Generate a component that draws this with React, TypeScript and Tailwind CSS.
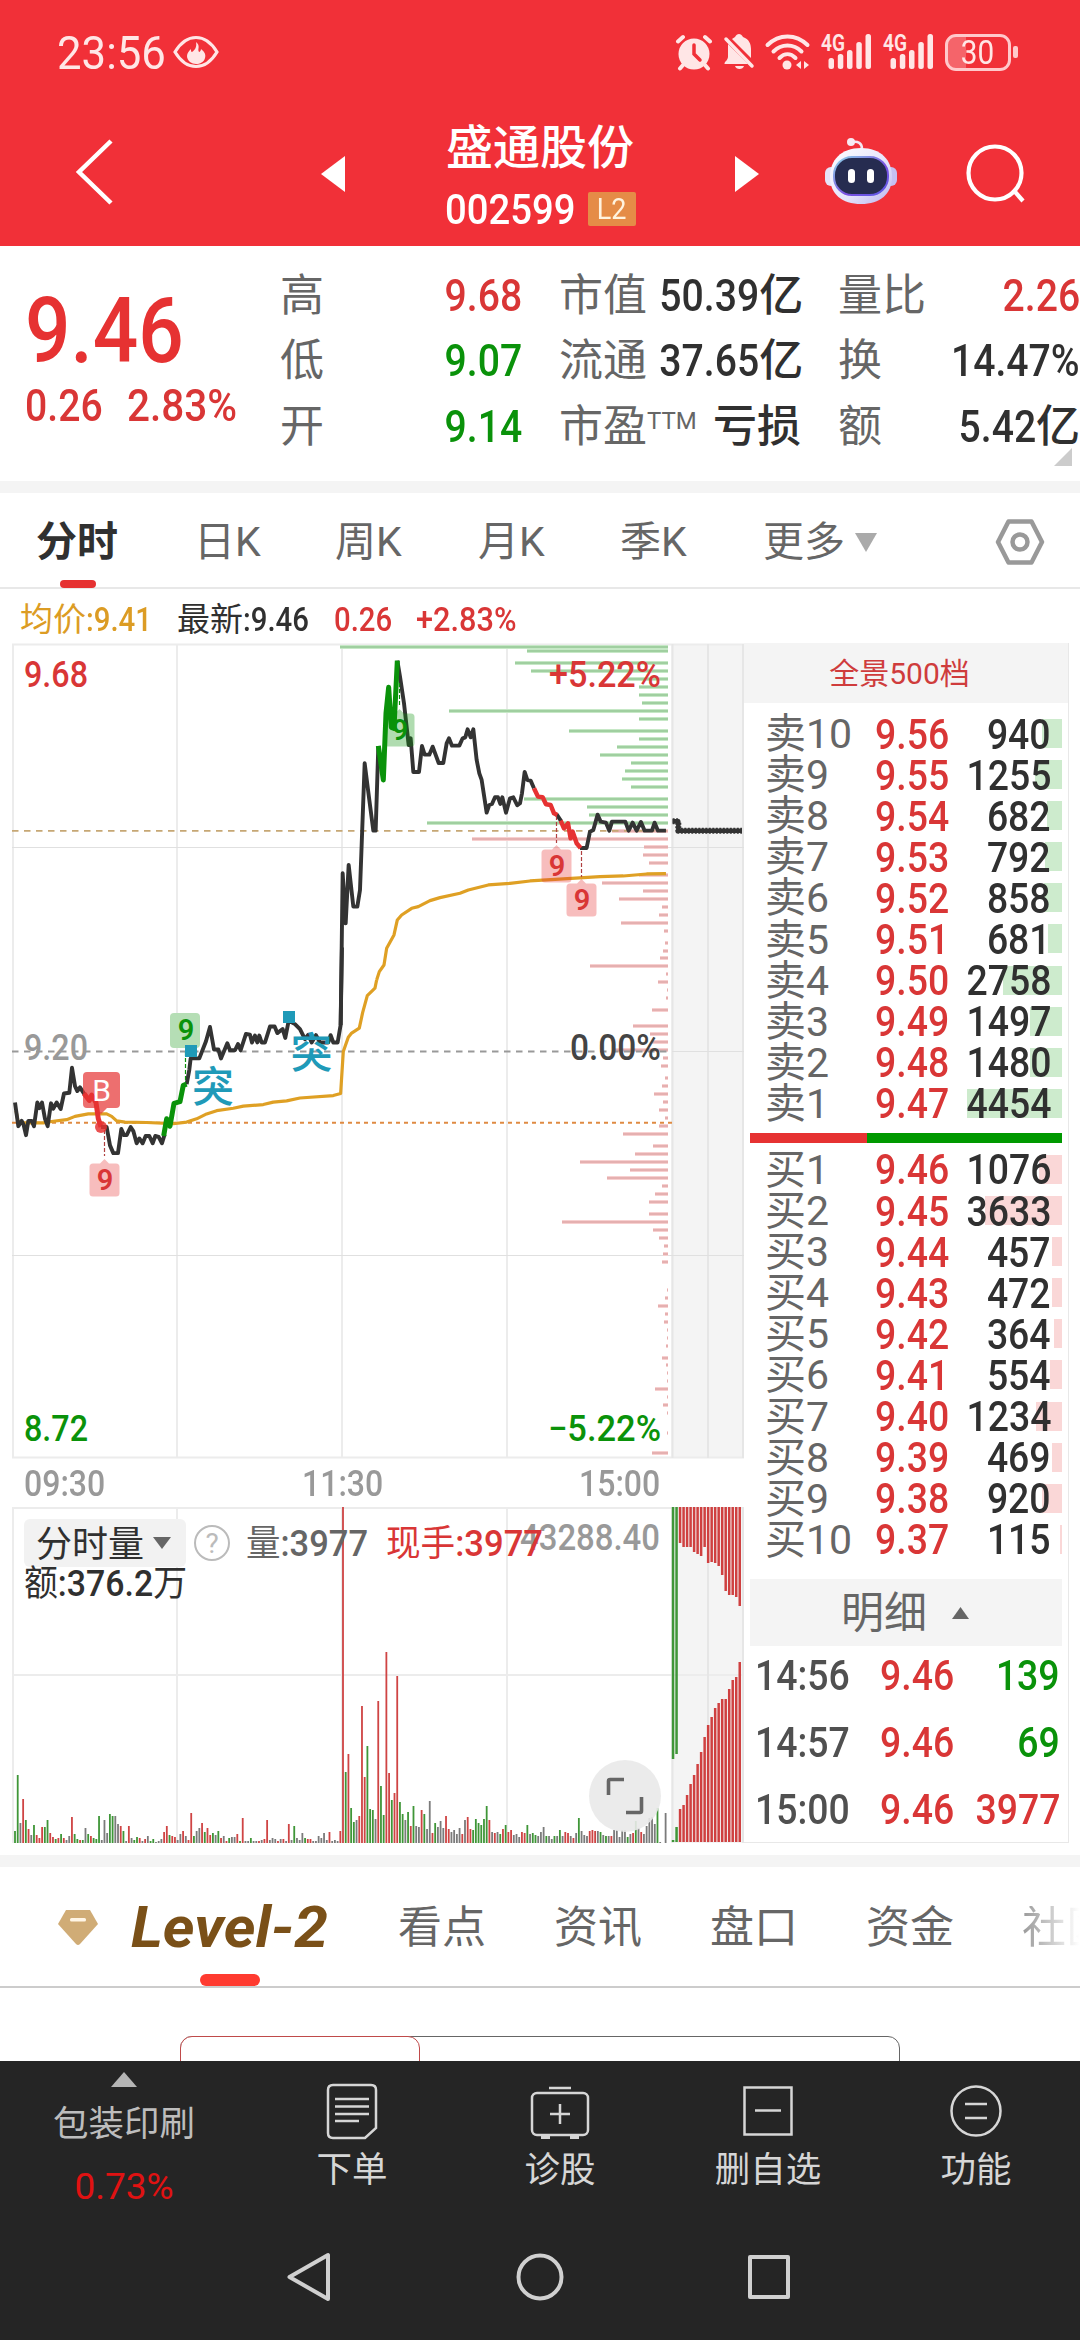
import React from 'react';

type Tone = 'r' | 'g' | 'k';

const TONE_FILL: Record<Tone, string> = {
    r: '#cf4444',
    g: '#3f9638',
    k: '#7b7b7b',
};

// --- Depth-of-book data ---
const SELLS: [string, string, number][] = [
    ['卖10', '9.56', 940],
    ['卖9', '9.55', 1255],
    ['卖8', '9.54', 682],
    ['卖7', '9.53', 792],
    ['卖6', '9.52', 858],
    ['卖5', '9.51', 681],
    ['卖4', '9.50', 2758],
    ['卖3', '9.49', 1497],
    ['卖2', '9.48', 1480],
    ['卖1', '9.47', 4454],
];

const BUYS: [string, string, number][] = [
    ['买1', '9.46', 1076],
    ['买2', '9.45', 3633],
    ['买3', '9.44', 457],
    ['买4', '9.43', 472],
    ['买5', '9.42', 364],
    ['买6', '9.41', 554],
    ['买7', '9.40', 1234],
    ['买8', '9.39', 469],
    ['买9', '9.38', 920],
    ['买10', '9.37', 115],
];

const TRADES = [
    { time: '14:56', price: '9.46', volume: '139', color: 'text-[#0a920a]' },
    { time: '14:57', price: '9.46', volume: '69', color: 'text-[#0a920a]' },
    { time: '15:00', price: '9.46', volume: '3977', color: 'text-[#d93636]' },
];

// Chips by price level: [y, length], drawn leftwards from the right edge of the chart
const CHIPS_ABOVE = [
    [647, 328], [651, 141], [663, 153], [671, 137], [679, 41], [687, 29], [695, 29], [703, 26], [711, 219], [719, 29],
    [731, 99], [739, 29], [747, 51], [755, 68], [763, 37], [771, 43], [779, 46], [787, 37], [799, 144], [807, 81],
    [815, 79], [823, 241],
];

const CHIPS_BELOW = [
    [831, 56], [839, 196], [847, 24], [855, 25], [863, 19], [875, 29], [883, 66], [891, 25], [899, 49], [907, 6],
    [915, 9], [923, 47], [931, 4], [943, 3], [951, 5], [958, 8], [966, 78], [974, 2], [982, 10], [990, 1],
    [998, 2], [1010, 16], [1026, 35], [1034, 18], [1042, 16], [1050, 55], [1058, 5], [1066, 7], [1078, 3], [1086, 6],
    [1094, 14], [1102, 5], [1110, 9], [1118, 3], [1126, 9], [1134, 45], [1146, 15], [1154, 33], [1162, 88], [1170, 38],
    [1178, 61], [1186, 6], [1194, 13], [1202, 19], [1214, 19], [1222, 106], [1230, 15], [1238, 9], [1246, 4], [1254, 5],
    [1262, 6], [1290, 1], [1298, 3], [1306, 10], [1314, 3], [1322, 4], [1330, 1], [1338, 1], [1346, 2], [1358, 6],
    [1365, 2], [1373, 1], [1381, 1], [1389, 13], [1397, 1], [1405, 5], [1413, 1], [1433, 1], [1453, 16],
];

// Minute volumes, one token per minute: tone + bar height
const MORNING =
    'g12 g68 k20 r44 g23 r14 k8 g18 r8 r5 r16 g16 g23 r10 r6 g4 r5 g9 r5 k3 k7 r26 g9 g4 r3 g3 k15 g9 r7 g5 g4 g27 k3 k23 k10 g29 g27 k27 k19 r17 g12 k2 r17 k5 g3 g6 r5 k2 r4 k7 g2 g4 k1 k2 k4 r11 r17 g8 r7 r6 k3 k9 r12 k7 r3 r30 g7 k12 k15 r20 g11 r15 r8 g10 k8 g12 r5 k7 r2 g5 k6 k6 r9 g2 r25 k2 k2 g5 k2 k2 r2 k3 r4 r23 k3 k5 k4 r2 k4 r4 k2 r19 k3 g17 k5 k3 k10 g5 r4 r4 k2 k2 k7 k5 k10 k3 r11 k2 k3 k2 r12';
const AFTERNOON =
    'r336 g71 r89 g35 g21 k23 r27 r137 r66 g97 g34 g33 k24 r142 g57 g28 r191 r70 g43 r50 r167 g41 g29 k23 g31 r17 g37 k17 k16 r33 g29 k14 k42 r10 g20 k16 k22 k15 r27 r14 k11 k13 k9 k15 r9 k23 r26 r14 g13 g24 g20 g18 g24 g37 r23 k11 r10 k11 g9 r14 g18 r11 r13 k8 k9 k6 r11 r10 g18 k9 g10 g8 k7 k11 k16 g7 k7 k4 g7 k7 g13 k7 r11 r10 k7 r5 k10 g25 k12 k8 k7 r12 r13 r12 k12 g11 k8 g7 k7 r7 k13 k13 k6 k13 k13 g6 k9 r10 g22 k15 r11 k9 k17 k25 k26 k19 g35 k1 k0 k30';

const AUCTION_TOP = [252, 247, 36, 40, 40, 40, 45, 47, 49, 40, 56, 55, 56, 59, 68, 84, 88, 88, 90, 99];
const AUCTION_BOTTOM = [2, 15, 33, 37, 47, 58, 67, 78, 90, 105, 117, 125, 134, 139, 143, 143, 153, 162, 165, 180];

const parseBars = (source: string) =>
    source.split(' ').map(token => ({ tone: token[0] as Tone, height: Number(token.slice(1)) }));

// Figures are set condensed; `right` keeps the right edge in place instead of the left one
const Num: React.FC<{ children: React.ReactNode; right?: boolean }> = ({ children, right }) => (
    <span className={`inline-block scale-x-[0.89] ${right ? 'origin-right' : 'origin-left'}`}>{children}</span>
);

/* ------------------------------ status bar ------------------------------ */

const Signal: React.FC = () => (
    <svg className="overflow-visible" width="52" height="38" viewBox="0 0 52 38" fill="#ffe6e6">
        <text x="0" y="18" fontSize="23" fontWeight="600" textLength="24" lengthAdjust="spacingAndGlyphs">4G</text>
        <rect x="7.5" y="25" width="5.5" height="11" rx="2.5" />
        <rect x="16.8" y="21" width="5.5" height="15" rx="2.5" />
        <rect x="26" y="17" width="5.5" height="19" rx="2.5" />
        <rect x="35.3" y="9" width="5.5" height="27" rx="2.5" />
        <rect x="44.5" y="1" width="5.5" height="35" rx="2.5" />
    </svg>
);

const StatusBar: React.FC = () => (
    <div className="flex h-[104px] items-center pl-[57px] text-[#ffe6e6]">
        <span className="w-[116px] text-[47px] leading-none"><span className="inline-block origin-left scale-x-[0.93]">23:56</span></span>
        <svg width="46" height="34" viewBox="0 0 46 34" fill="none">
            <path d="M2 17C8 7 15 2.500 23 2.500S38 7 44 17C38 27 31 31.500 23 31.500S8 27 2 17Z" stroke="#ffe6e6" strokeWidth="3.200" />
            <path d="M23 7c5 4 1 7 3 10 1 0 2-2 2-3 4 3 5 6 4 9-1 4-5 6-9 6s-9-3-9-8c0-3 2-5 4-7 0 2 0 3 1 3 3-2 5-5 4-10Z" fill="#ffe6e6" />
        </svg>

        <div className="ml-[456px] flex items-center">
            {/* alarm */}
            <svg width="38" height="38" viewBox="0 0 38 38" fill="none" stroke="#ffe6e6" strokeLinecap="round">
                <circle cx="19" cy="21" r="15.500" fill="#ffe6e6" stroke="none" />
                <path d="M3 8.500 8 4M35 8.500 30 4M8 32l-3 3.500M30 32l3 3.500" strokeWidth="4" />
                <path d="M19 12v9l6 6" stroke="#f13038" strokeWidth="3.500" />
            </svg>
            {/* muted bell */}
            <svg className="ml-[10px]" width="32" height="38" viewBox="0 0 32 38" fill="#ffe6e6">
                <path d="M12 4c2-4 6-4 8 0 6 2 8 7 8 12v9L9 6Z" />
                <path d="M5 11 25 31H1.500c0-3 3-3 3.500-7Z" />
                <path d="M12 33h9c-1 4-8 4-9 0Z" />
                <path d="M3 6 29 33" stroke="#ffe6e6" strokeWidth="3.500" strokeLinecap="round" />
            </svg>
            {/* wifi */}
            <svg className="ml-[9px]" width="48" height="38" viewBox="0 0 48 38" fill="none" stroke="#ffe6e6" strokeWidth="4" strokeLinecap="round">
                <path d="M3.500 12C15 .500 32 .500 43.500 12M9.500 18.500c8-8 20-8 28 0M15.500 25c5-5 11-5 16 0" />
                <circle cx="23" cy="32" r="4.500" fill="#ffe6e6" stroke="none" />
                <path d="M37 28v8l-5-4ZM40 28v8l5-4Z" fill="#ffe6e6" stroke="none" />
            </svg>
            <div className="ml-[9px] flex gap-[10px]">
                <Signal />
                <Signal />
            </div>
            {/* battery */}
            <div className="ml-[10px] flex items-center gap-[2px]">
                <div className="flex h-[37px] w-[66px] items-center justify-center rounded-[11px] border-[3px] border-[#ffc9cb] bg-linear-to-r from-[#f5646a] from-30% to-[#f13038] to-30% text-[33px] leading-none">
                    <span className="scale-x-90">30</span>
                </div>
                <div className="h-[12px] w-[5px] rounded-[2px] bg-[#ffc9cb]" />
            </div>
        </div>
    </div>
);

/* -------------------------------- header -------------------------------- */

const RobotIcon: React.FC = () => (
    <svg width="72" height="68" viewBox="0 0 72 68">
        <defs>
            <linearGradient id="robot-shell" x1="0" y1="0" x2="1" y2="1">
                <stop offset="0" stopColor="#ffffff" />
                <stop offset="0.600" stopColor="#e4e2fa" />
                <stop offset="1" stopColor="#b9b3ee" />
            </linearGradient>
            <linearGradient id="robot-rim" x1="0" y1="0" x2="1" y2="1">
                <stop offset="0" stopColor="#8fd6e8" />
                <stop offset="0.600" stopColor="#7a4fe0" />
                <stop offset="1" stopColor="#5a5be6" />
            </linearGradient>
        </defs>
        <path d="M37 12c0-6-4-8-10-7" fill="none" stroke="#f4e6f2" strokeWidth="2.500" />
        <circle cx="26" cy="5" r="4" fill="#f7e9f2" />
        <rect x="0" y="30" width="12" height="19" rx="6" fill="#e6e3f8" />
        <rect x="60" y="30" width="12" height="19" rx="6" fill="#c5c0f2" />
        <path d="M36 11c20 0 31 12 31 29S55 67 36 67 5 57 5 40s11-29 31-29Z" fill="url(#robot-shell)" />
        <rect x="9" y="20" width="54" height="38" rx="18" fill="#262c50" stroke="url(#robot-rim)" strokeWidth="2" />
        <rect x="23" y="32" width="7" height="14" rx="3.500" fill="#fff" />
        <rect x="42" y="32" width="7" height="14" rx="3.500" fill="#fff" />
    </svg>
);

const StockHeader: React.FC = () => (
    <div className="flex h-[142px] items-start text-white">
        <svg className="mt-[35px] ml-[74px]" width="40" height="66" viewBox="0 0 40 66" fill="none" stroke="#fff" strokeWidth="4.500">
            <path d="M37 2 5 33l32 31" />
        </svg>
        <svg className="mt-[52px] ml-[207px]" width="24" height="36" viewBox="0 0 24 36" fill="#fff">
            <path d="M24 0v36L0 18Z" />
        </svg>
        <div className="ml-[86px] flex w-[218px] flex-col items-center">
            <div className="mt-[20px] text-[47px] leading-[48px] font-medium whitespace-nowrap">盛通股份</div>
            <div className="mt-[18px] flex w-[191px] items-center justify-between">
                <span className="w-[128px] text-[43px] leading-[38px] font-medium"><Num>002599</Num></span>
                <span className="flex h-[34px] w-[48px] items-center justify-center rounded-[2px] bg-[#e58c47] text-[30px] leading-none text-[#fff3df]">
                    <span className="scale-x-90">L2</span>
                </span>
            </div>
        </div>
        <svg className="mt-[52px] ml-[86px]" width="24" height="36" viewBox="0 0 24 36" fill="#fff">
            <path d="M0 0v36l24-18Z" />
        </svg>
        <div className="mt-[33px] ml-[66px]">
            <RobotIcon />
        </div>
        <svg className="mt-[39px] ml-[68px]" width="62" height="62" viewBox="0 0 62 62" fill="none" stroke="#fff" strokeWidth="4.200">
            <circle cx="30" cy="30" r="26.500" />
            <path d="M48 46.500 58 58" />
        </svg>
    </div>
);

/* --------------------------------- quote -------------------------------- */

interface QuoteCell {
    label: React.ReactNode;
    value?: string;
    unit?: string;
    color?: string;
}

const QuoteColumn: React.FC<{ cells: QuoteCell[]; className: string }> = ({ cells, className }) => (
    <div className={`flex flex-col pt-[17px] ${className}`}>
        {cells.map((cell, i) => (
            <div key={i} className="flex h-[65.500px] items-center justify-between text-[44px] leading-none whitespace-nowrap">
                <span className="text-[#666]">{cell.label}</span>
                <span className={`font-medium ${cell.color ?? 'text-[#303030]'}`}>
                    {cell.value && <Num right>{cell.value}</Num>}
                    {cell.unit}
                </span>
            </div>
        ))}
    </div>
);

const QuotePanel: React.FC = () => (
    <section className="relative flex h-[235px]">
        <div className="w-[280px] pl-[25px] text-[#d93636]">
            <div className="pt-[40px] text-[90px] leading-[92px] font-medium text-[#e63232]"><Num>9.46</Num></div>
            <div className="mt-[5px] flex text-[44px] leading-[46px] font-medium">
                <span className="w-[102px]"><Num>0.26</Num></span>
                <span className="origin-left scale-x-[0.92]">2.83%</span>
            </div>
        </div>
        <QuoteColumn
            className="w-[242px]"
            cells={[
                { label: '高', value: '9.68', color: 'text-[#d93636]' },
                { label: '低', value: '9.07', color: 'text-[#0a920a]' },
                { label: '开', value: '9.14', color: 'text-[#0a920a]' },
            ]}
        />
        <QuoteColumn
            className="ml-[37px] w-[242px]"
            cells={[
                { label: '市值', value: '50.39', unit: '亿' },
                { label: '流通', value: '37.65', unit: '亿' },
                { label: <>市盈<sup className="top-[-13px] text-[24px]">TTM</sup></>, unit: '亏损' },
            ]}
        />
        <QuoteColumn
            className="ml-[37px] w-[242px]"
            cells={[
                { label: '量比', value: '2.26', color: 'text-[#d93636]' },
                { label: '换', value: '14.47%' },
                { label: '额', value: '5.42', unit: '亿' },
            ]}
        />
        <svg className="absolute right-[8px] bottom-[15px]" width="18" height="18" viewBox="0 0 18 18" fill="#ccc">
            <path d="M18 0v18H0Z" />
        </svg>
    </section>
);

/* ------------------------------ period tabs ----------------------------- */

const PeriodTabs: React.FC = () => (
    <nav className="flex h-[96px] items-center border-b-2 border-[#e8e8e8] pt-[4px] text-[41px] leading-none whitespace-nowrap text-[#666]">
        <div className="relative ml-[36px] w-[158px] font-bold text-[#303030]">
            分时
            <span className="absolute top-[58px] left-[24px] h-[8px] w-[36px] rounded-full bg-[#e63232]" />
        </div>
        <span className="w-[141px]">日K</span>
        <span className="w-[143px]">周K</span>
        <span className="w-[142px]">月K</span>
        <span className="w-[143px]">季K</span>
        <span className="w-[92px]">更多</span>
        <svg width="22" height="19" viewBox="0 0 22 19" fill="#aaa">
            <path d="M0 0h22L11 19Z" />
        </svg>
        <svg className="ml-[118px]" width="50" height="46" viewBox="0 0 50 46" fill="none" stroke="#999" strokeWidth="4.500" strokeLinejoin="round">
            <path d="M13.500 2.500h23L47 23 36.500 43.500h-23L3 23Z" />
            <circle cx="25" cy="23" r="7.500" />
        </svg>
    </nav>
);

/* ------------------------------ price chart ----------------------------- */

const Badge: React.FC<{ x: number; y: number; fill: string; color: string }> = ({ x, y, fill, color }) => (
    <>
        <path
            d={`M${x - 15} ${y - 14}q0-3.500 3.500-3.500h7l4.500-4.500 4.500 4.500h7q3.500 0 3.500 3.500v26q0 3.500-3.500 3.500h-23q-3.500 0-3.500-3.500Z`}
            fill={fill}
            fillOpacity="0.320"
        />
        <text x={x + 0.5} y={y + 9} fontSize="29" fontWeight="600" textAnchor="middle" fill={color}>9</text>
    </>
);

const PriceChart: React.FC = () => (
    <svg className="block" width="744" height="816" viewBox="0 643 744 816">
        <rect x="671" y="644" width="73" height="814" fill="#f4f4f4" />

        {/* grid */}
        <g stroke="#ececec" strokeWidth="2">
            <path d="M12 644.500h732M12 1457.500h732M13 644v814M177 644v814M342 644v814M507 644v814" />
            <path d="M672.500 644v814M708 644v814M743 644v814" stroke="#e6e6e6" />
            <path d="M12 847.500h732M12 1255.500h732M672 1051.500h72" stroke="#e0e0e0" strokeWidth="1" />
        </g>

        {/* chips */}
        {CHIPS_ABOVE.map(([y, length]) => (
            <g key={y}>
                <rect x={668 - length} y={y - 2} width={length} height="4" fill="#c6e8c6" />
                <rect x={668 - length} y={y - 1} width={length} height="2" fill="#a0cfa0" />
            </g>
        ))}
        {CHIPS_BELOW.map(([y, length]) => (
            <g key={y}>
                <rect x={668 - length} y={y - 2} width={length} height="4" fill="#f7d0d0" />
                <rect x={668 - length} y={y - 1} width={length} height="2" fill="#e5b0b0" />
            </g>
        ))}

        <path d="M12 830.800h656" stroke="#c6a774" strokeWidth="1.800" strokeDasharray="6.500 5.500" />
        <path d="M12 1051.500h656" stroke="#999" strokeWidth="1.800" strokeDasharray="6.500 5.500" />
        <path d="M12 1122.800h660" stroke="#df8a42" strokeWidth="2" strokeDasharray="4 4" />

        <g fontSize="36" fontWeight="500">
            <text x="24" y="687" textLength="64" lengthAdjust="spacingAndGlyphs" fill="#d93636">9.68</text>
            <text x="24" y="1060" textLength="64" lengthAdjust="spacingAndGlyphs" fill="#999">9.20</text>
            <text x="24" y="1441" textLength="64" lengthAdjust="spacingAndGlyphs" fill="#0a920a">8.72</text>
        </g>

        {/* average price */}
        <g fill="none" stroke="#dfa024" strokeWidth="3.200" strokeLinejoin="round">
            <path
                vectorEffect="non-scaling-stroke"
                transform="translate(0 580) scale(0.3333 0.4082)"
                d="M48 1300 55 1330 130 1330 160 1326 200 1322 225 1314 265 1308 320 1308 335 1314 350 1325 375 1328 440 1329 520 1332 560 1328 590 1320 620 1308 650 1300 700 1294 730 1289 790 1285 820 1279 860 1276 900 1269 1000 1263 1022 1258 1030 1155 1045 1120 1055 1110 1078 1098 1088 1060 1102 1018 1125 1000 1130 980"
            />
            <path
                vectorEffect="non-scaling-stroke"
                transform="translate(330 580) scale(0.3333)"
                d="M140 1200 148 1175 162 1155 170 1105 192 1065 202 1020 215 1005 245 985 265 980 300 962 330 953 390 940 415 930 475 915 540 910 600 903 700 897 810 890 880 888 950 882 1008 881"
            />
        </g>

        {/* price, morning */}
        <g transform="translate(0 580) scale(0.3333 0.4082)" fill="none" stroke="#333" strokeWidth="3.900" strokeLinejoin="round">
            <path vectorEffect="non-scaling-stroke" d="M45 1280 55 1338 65 1325 71 1335 78 1360 85 1325 95 1325 102 1338 112 1280 118 1294 126 1280 135 1320 143 1338 153 1282 160 1295 170 1280 182 1296 192 1258 208 1256 216 1195 225 1240 232 1252 240 1243 255 1262" />
            <path vectorEffect="non-scaling-stroke" stroke="#e63232" strokeWidth="5" d="M252 1258 268 1275 275 1262 288 1280 295 1320 303 1340" />
            <path vectorEffect="non-scaling-stroke" d="M303 1340 320 1340 330 1385 340 1404 354 1404 364 1345 372 1360 380 1360 392 1340 400 1350 410 1380 418 1368 428 1380 437 1362 448 1362 458 1380 466 1362 476 1364 486 1380 494 1358" />
            <path vectorEffect="non-scaling-stroke" stroke="#0a920a" strokeWidth="5" d="M491 1362 500 1320 510 1338 522 1282 540 1278 550 1238 560 1235" />
            <path vectorEffect="non-scaling-stroke" d="M560 1235 568 1200 572 1172 598 1172 618 1130 630 1095 642 1150 655 1150 663 1172 682 1135 690 1152 705 1152 714 1137 722 1152 738 1112 750 1114 756 1133 765 1116 772 1133 778 1116 785 1133 795 1133 810 1094 824 1094 832 1110 848 1100 856 1122 866 1080 885 1088 900 1100 915 1125 925 1114 935 1133 948 1115 960 1133 985 1133 992 1115 1000 1133 1013 1133 1022 1090 1026 900" />
        </g>

        {/* price, afternoon */}
        <g transform="translate(330 580) scale(0.3333)" fill="none" stroke="#333" strokeWidth="3.900" strokeLinejoin="round">
            <path vectorEffect="non-scaling-stroke" d="M32 1335 38 880 47 1030 56 855 70 980 82 980 90 930 104 550 118 660 130 752 137 752 145 498" />
            <path vectorEffect="non-scaling-stroke" d="M202 242 210 290 222 370 236 495 242 475 250 576 267 576 276 498 284 524 298 524 308 500 326 549 340 549 350 490 357 475 366 497 388 497 398 475 406 472 413 448 422 472 430 448 440 540 448 580 455 600 470 698 478 675 486 672 495 652 504 652 511 672 517 652 528 698 540 655 550 652 562 676 570 670 576 640 584 576 592 600 602 602 612 625" />
            <path vectorEffect="non-scaling-stroke" stroke="#0a920a" strokeWidth="5" d="M145 498 160 600 168 400 176 322 184 442 192 445 202 242" />
            <path vectorEffect="non-scaling-stroke" d="M680 703 694 724M750 804 770 804 780 755 790 750 803 704 812 725 828 728 838 752 846 725 886 725 896 752 908 728 920 752 933 726 944 752 966 752 974 728 984 752 1008 752" />
            <path vectorEffect="non-scaling-stroke" stroke="#e63232" strokeWidth="4.500" d="M612 625 624 650 638 652 648 673 662 675 672 700 682 705M692 722 702 745 714 730 722 775 728 755 740 790 752 804" />
            <path vectorEffect="non-scaling-stroke" strokeWidth="4.500" d="M1028 724H1045V752H1236" />
            <path vectorEffect="non-scaling-stroke" strokeWidth="6" strokeDasharray="2 1.500" d="M1028 724H1045V752H1236" />
        </g>

        {/* nine-turn markers */}
        <g strokeWidth="1.200" strokeDasharray="4 2">
            <path d="M104.500 1130v26M556.500 816v27M581.500 851v26" stroke="#b04040" />
            <path d="M185.500 1052v35M399.500 683v23" stroke="#0a920a" />
        </g>
        <Badge x={104.5} y={1181} fill="#e63232" color="#d93636" />
        <Badge x={556.5} y={867} fill="#e63232" color="#d93636" />
        <Badge x={581.5} y={901} fill="#e63232" color="#d93636" />
        <Badge x={399.5} y={731} fill="#0a920a" color="#0a920a" />
        <rect x="170" y="1013" width="30" height="35" rx="4" fill="#b5deb5" />
        <text x="186" y="1040" fontSize="29" fontWeight="600" textAnchor="middle" fill="#0a920a">9</text>

        {/* buy point */}
        <circle cx="101" cy="1127" r="6" fill="#e63232" fillOpacity="0.850" />
        <path d="M87 1072h29q4 0 4 4v28q0 4-4 4h-9l-6 6-6-6h-8q-4 0-4-4v-28q0-4 4-4Z" fill="#e63232" fillOpacity="0.700" />
        <text x="101.500" y="1101" fontSize="30" textAnchor="middle" fill="#fff">B</text>

        {/* breakouts */}
        <g fill="#1f9ab8" fontSize="42" fontWeight="500">
            <rect x="185" y="1045" width="12" height="12" />
            <rect x="283" y="1011" width="12" height="12" />
            <text x="213" y="1102" textAnchor="middle">突</text>
            <text x="311.500" y="1068" textAnchor="middle">突</text>
        </g>

        <g fontSize="36" fontWeight="500">
            <text x="549" y="687" textLength="112" lengthAdjust="spacingAndGlyphs" fill="#d93636">+5.22%</text>
            <text x="570" y="1060" textLength="91" lengthAdjust="spacingAndGlyphs" fill="#444">0.00%</text>
            <text x="548" y="1441" textLength="113" lengthAdjust="spacingAndGlyphs" fill="#0a920a">−5.22%</text>
        </g>
    </svg>
);

/* ----------------------------- volume chart ----------------------------- */

const VolumeBars: React.FC<{ source: string; start: number }> = ({ source, start }) => (
    <>
        {parseBars(source).map((bar, i) => (
            <rect key={i} x={start + i * 2.711 - 0.9} y={1843 - bar.height} width="1.800" height={bar.height} fill={TONE_FILL[bar.tone]} />
        ))}
    </>
);

const VolumeChart: React.FC = () => (
    <svg className="block" width="744" height="336" viewBox="0 1507 744 336">
        <rect x="671" y="1507" width="73" height="336" fill="#f4f4f4" />
        <g stroke="#ececec" strokeWidth="2">
            <path d="M12 1508h732M12 1675h732M13 1507v336M177 1507v336M342 1507v336M507 1507v336" />
            <path d="M672.500 1507v336M708 1507v336M743 1507v336" stroke="#e6e6e6" />
        </g>

        <rect x="24" y="1519" width="162" height="48" rx="6" fill="#f2f2f2" />
        <path d="M153 1537h18l-9 12Z" fill="#666" />
        <circle cx="212" cy="1543" r="17" fill="none" stroke="#bbb" strokeWidth="2" />
        <text x="212" y="1553" fontSize="28" textAnchor="middle" fill="#bbb">?</text>

        <VolumeBars source={MORNING} start={15} />
        <VolumeBars source={AFTERNOON} start={343} />
        {AUCTION_TOP.map((height, i) => (
            <rect key={i} x={671.8 + i * 3.51} y="1507" width="2.500" height={height} fill={i < 2 ? '#3f9638' : '#cf4040'} />
        ))}
        {AUCTION_BOTTOM.map((height, i) => (
            <rect key={i} x={671.8 + i * 3.51} y={1842 - height} width="2.500" height={height} fill={i < 2 ? '#3f9638' : '#cf4040'} />
        ))}

        <g fontSize="36" fontWeight="500">
            <text x="36" y="1557" fontWeight="400" textLength="108" fill="#303030">分时量</text>
            <text x="520" y="1550" textLength="140" lengthAdjust="spacingAndGlyphs" fill="#999">43288.40</text>
            <text x="246" y="1556" textLength="122" lengthAdjust="spacingAndGlyphs" fill="#666">
                <tspan fontWeight="400">量</tspan>:3977
            </text>
            <text x="386" y="1556" textLength="157" lengthAdjust="spacingAndGlyphs" fill="#d93636">
                <tspan fontWeight="400">现手</tspan>:3977
            </text>
            <text x="24" y="1596" textLength="163" lengthAdjust="spacingAndGlyphs" fill="#303030">
                <tspan fontWeight="400">额</tspan>:376.2<tspan fontWeight="400">万</tspan>
            </text>
        </g>

        {/* full-screen button */}
        <circle cx="625" cy="1796" r="36" fill="#e9e9e9" fillOpacity="0.900" />
        <path d="M608.500 1795v-14q0-1.500 1.500-1.500h14M626 1812.500h14q1.500 0 1.500-1.500v-14" fill="none" stroke="#666" strokeWidth="3.600" />
    </svg>
);

const Charts: React.FC = () => (
    <div className="w-[744px]">
        <PriceChart />
        <div className="flex h-[48px] items-center pt-[2px] pl-[24px] text-[36px] leading-none font-medium text-[#999]">
            <span className="w-[278px]"><Num>09:30</Num></span>
            <span className="w-[277px]"><Num>11:30</Num></span>
            <span><Num>15:00</Num></span>
        </div>
        <VolumeChart />
    </div>
);

/* ------------------------------ order book ------------------------------ */

const BookRow: React.FC<{ row: [string, string, number]; bar: string }> = ({ row: [label, price, volume], bar }) => (
    <div className="relative flex h-[41.100px] items-center pt-[2px] pl-[15px] text-[42px] leading-none font-medium whitespace-nowrap">
        <span className={`absolute top-[6px] right-0 h-[29px] ${bar}`} style={{ width: volume * 0.0213 }} />
        <span className="w-[110px] text-[41px] font-normal text-[#666]">{label}</span>
        <span className="w-[80px] text-[#d93636]"><Num>{price}</Num></span>
        <span className="relative ml-auto pr-[11px] text-[#303030]"><Num right>{volume}</Num></span>
    </div>
);

const OrderBook: React.FC = () => (
    <aside className="h-[1200px] w-[325px] border-r border-b border-[#e8e8e8]">
        <div className="flex h-[60px] items-center justify-center bg-[#f4f4f4] pt-[2px] pr-[13px] text-[30px] leading-none text-[#cf3c3c]">全景500档</div>
        <div className="px-[6px]">
            <div className="pt-[10px]">
                {SELLS.map(row => <BookRow key={row[0]} row={row} bar="bg-[#cdebcd]" />)}
            </div>
            <div className="mt-[9px] mb-[6px] flex h-[10px]">
                <div className="w-[117px] bg-[#e63232]" />
                <div className="flex-1 bg-[#009900]" />
            </div>
            {BUYS.map(row => <BookRow key={row[0]} row={row} bar="bg-[#fad7d7]" />)}
            <div className="mt-[19px] flex h-[67px] items-center bg-[#f4f4f4] pt-[2px] pl-[91px] text-[43px] leading-none text-[#666]">
                明细
                <svg className="ml-[25px]" width="17" height="12" viewBox="0 0 17 12" fill="#666">
                    <path d="M0 12h17L8.500 0Z" />
                </svg>
            </div>
            {TRADES.map(trade => (
                <div key={trade.time} className="flex h-[67px] items-center pr-[2px] pb-[6px] pl-[5px] text-[42px] leading-none font-medium">
                    <span className="w-[125px] text-[#505050]"><Num>{trade.time}</Num></span>
                    <span className="w-[80px] text-[#d93636]"><Num>{trade.price}</Num></span>
                    <span className={`ml-auto ${trade.color}`}><Num right>{trade.volume}</Num></span>
                </div>
            ))}
        </div>
    </aside>
);

/* ----------------------------- lower content ---------------------------- */

const SectionTabs: React.FC = () => (
    <nav className="relative flex h-[121px] items-center overflow-hidden border-b-2 border-[#ccc] pt-[2px] text-[44px] leading-none whitespace-nowrap text-[#666]">
        <svg className="ml-[57px] shrink-0" width="42" height="37" viewBox="0 0 42 37">
            <path d="M9 1h24l8 14-18 20q-2 2-4 0L1 15Z" fill="#d0ac76" />
            <rect x="13" y="9" width="16" height="3.500" rx="1.500" fill="#fff6e6" />
        </svg>
        <div className="ml-[32px] w-[267px] shrink-0">
            <svg className="block overflow-visible" width="202" height="58" viewBox="0 0 202 58">
                <text x="0" y="48" fontSize="57" fontWeight="700" fontStyle="italic" fill="#7a5018" textLength="197" lengthAdjust="spacingAndGlyphs">Level-2</text>
            </svg>
        </div>
        <span className="w-[156px] shrink-0">看点</span>
        <span className="w-[156px] shrink-0">资讯</span>
        <span className="w-[156px] shrink-0">盘口</span>
        <span className="w-[156px] shrink-0">资金</span>
        <span className="bg-linear-to-r from-[#999] to-white to-65% bg-clip-text text-transparent">社区</span>
        <span className="absolute bottom-0 left-[200px] h-[12px] w-[60px] rounded-full bg-[#ff3b30]" />
    </nav>
);

const ToolItem: React.FC<{ label: string; children: React.ReactNode }> = ({ label, children }) => (
    <div className="flex w-[208px] flex-col items-center pt-[20px] text-[35.500px] leading-none text-[#d6d6d6]">
        <svg className="mb-[12px]" width="62" height="60" viewBox="0 0 62 60" fill="none" stroke="#d6d6d6" strokeWidth="2.500">
            {children}
        </svg>
        {label}
    </div>
);

const BottomBar: React.FC = () => (
    <footer className="flex h-[279px] flex-col bg-[#252525]">
        <div className="flex h-[166px]">
            <div className="flex w-[248px] flex-col items-center pt-[11px] text-[35.500px] leading-none">
                <svg width="26" height="15" viewBox="0 0 26 15" fill="#b5b5b5">
                    <path d="M0 15h26L13 0Z" />
                </svg>
                <span className="mt-[20px] text-[#bdbdbd]">包装印刷</span>
                <span className="mt-[25px] text-[37px] text-[#e01212]">0.73%</span>
            </div>
            <ToolItem label="下单">
                <path d="M12 4h38q5 0 5 5v38L44 57H12q-5 0-5-5V9q0-5 5-5Z" />
                <path d="M14 18h34M14 25.500h34M14 33h34M14 40h24" />
            </ToolItem>
            <ToolItem label="诊股">
                <rect x="3" y="12" width="56" height="42" rx="5" />
                <path d="M20 7h22M31 23v20M21 33h20" />
                <path d="M12 56h9M41 56h9" strokeWidth="4" />
            </ToolItem>
            <ToolItem label="删自选">
                <path d="M7.500 6.500h47v47h-47ZM18 29.500h26" />
            </ToolItem>
            <ToolItem label="功能">
                <circle cx="31" cy="30" r="24.500" />
                <path d="M20 23h22M20 37h22" />
            </ToolItem>
        </div>
        {/* system navigation */}
        <svg className="mt-[20px] ml-[280px] block" width="520" height="60" viewBox="280 2247 520 60" fill="none" stroke="#d0d0d0" strokeWidth="4" strokeLinejoin="round">
            <path d="M289.500 2277 328 2255v44Z" />
            <circle cx="540" cy="2277" r="21.500" />
            <rect x="750" y="2257" width="38" height="40" />
        </svg>
    </footer>
);

const App: React.FC = () => (
    <div className="flex h-[2340px] w-[1080px] flex-col overflow-hidden bg-white font-[Roboto,'Noto_Sans_CJK_SC',sans-serif]">
        <header className="h-[246px] bg-[#f13038]">
            <StatusBar />
            <StockHeader />
        </header>
        <QuotePanel />
        <div className="h-[12px] bg-[#f4f4f4]" />
        <PeriodTabs />

        {/* average / latest line */}
        <div className="flex h-[54px] items-center pt-[7px] pl-[20px] text-[33px] leading-none font-medium whitespace-nowrap text-[#d93636]">
            <span className="w-[157px] text-[#dc9c24]"><span className="font-normal">均价</span><Num>:9.41</Num></span>
            <span className="w-[157px] text-[#303030]"><span className="font-normal">最新</span><Num>:9.46</Num></span>
            <span className="w-[82px]"><Num>0.26</Num></span>
            <span className="origin-left scale-x-[0.93]">+2.83%</span>
        </div>

        <main className="flex">
            <Charts />
            <OrderBook />
        </main>

        <div className="mt-[12px] h-[12px] bg-[#f4f4f4]" />
        <SectionTabs />
        <div className="h-[73px] pt-[48px] pl-[180px]">
            <div className="h-[25px] w-[720px] overflow-hidden">
                <div className="h-[60px] w-full rounded-[12px] border border-[#666]">
                    <div className="-mt-px -ml-px h-[60px] w-[240px] rounded-[12px] border border-[#c04a4a] bg-white" />
                </div>
            </div>
        </div>
        <BottomBar />
    </div>
);

export default App;
